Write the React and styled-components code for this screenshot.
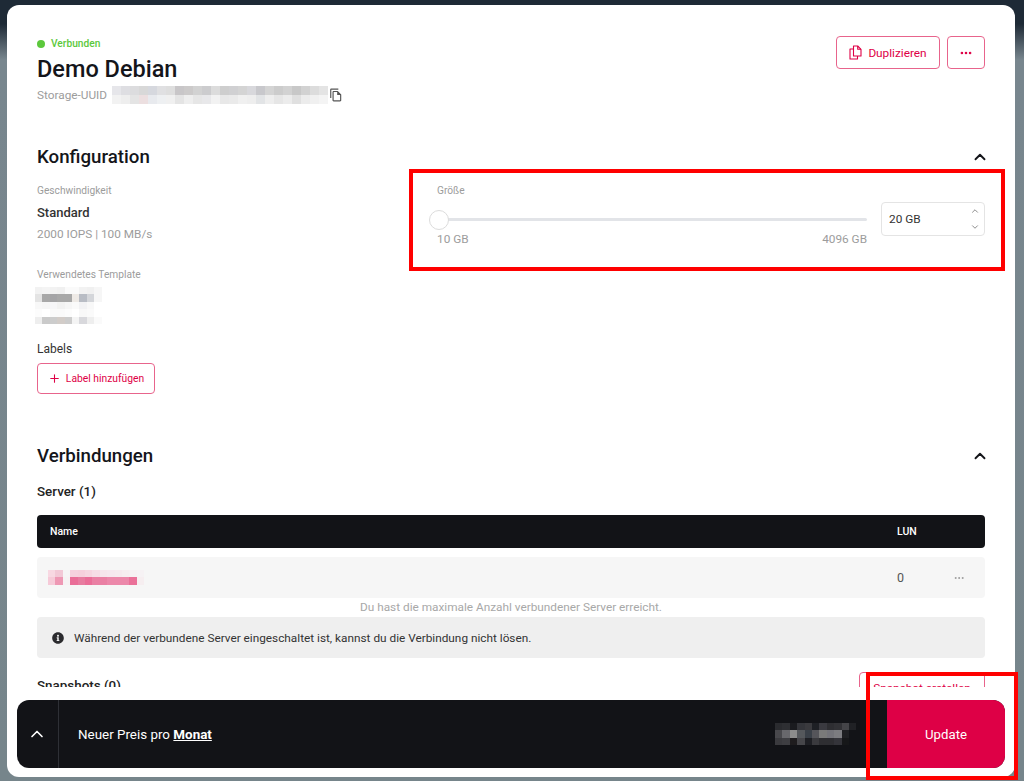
import React from 'react';
import styled, { createGlobalStyle } from 'styled-components';
import { ChevronUp, ChevronDown, Plus, Ellipsis } from 'lucide-react';
import { FaInfoCircle } from 'react-icons/fa';
import { MdOutlineFileCopy } from 'react-icons/md';

const pink = '#de0046';

const GlobalStyle = createGlobalStyle`
  html, body { margin: 0; padding: 0; height: 100%; }
  body {
    font-family: Roboto, "Liberation Sans", sans-serif;
    color: #14151a;
    overflow: hidden;
    background: linear-gradient(180deg, #1e2a36 0, #1e2a36 24px, #78868e 60px, #76858b 100%);
  }
`;

const Page = styled.div`
  position: relative;
  width: 1024px;
  height: 781px;
  padding: 5px 9px 4px 7px;
  box-sizing: border-box;
`;

const Card = styled.div`
  height: 100%;
  background: #fff;
  border-radius: 12px;
  display: flex;
  flex-direction: column;
  overflow: hidden;
`;

const Scroll = styled.div`
  height: 682px;
  overflow: hidden;
  padding: 31px 30px 0;
  box-sizing: border-box;
  flex: none;
`;

const Header = styled.div`
  display: flex;
  justify-content: space-between;
  align-items: flex-start;
  height: 109px;
`;

const Status = styled.div`
  display: flex;
  align-items: center;
  gap: 6px;
  height: 15px;
  font-size: 10.2px;
  font-weight: 500;
  color: #5cc83c;
`;

const Dot = styled.span`
  width: 8px;
  height: 8px;
  border-radius: 50%;
  background: #5cc83c;
`;

const Title = styled.h1`
  margin: 1px 0 0;
  font-size: 23.5px;
  line-height: 34px;
  font-weight: 500;
`;

const UuidRow = styled.div`
  display: flex;
  align-items: center;
  margin-top: 1px;
  height: 16px;
  font-size: 11.8px;
  color: #9c9c9c;
  svg { display: block; }
`;

const UuidLabel = styled.span`
  margin-right: 5px;
`;

const CopyButton = styled.span`
  display: flex;
  color: #555;
  margin-left: 1px;
`;

const HeaderActions = styled.div`
  display: flex;
  gap: 7px;
`;

const OutlineButton = styled.button`
  display: inline-flex;
  align-items: center;
  justify-content: center;
  gap: ${p => p.$gap || 6}px;
  width: ${p => p.$width}px;
  height: ${p => p.$height || 33}px;
  padding: 0;
  background: #fff;
  border: 1px solid #e8648c;
  border-radius: 4px;
  color: ${pink};
  font-family: inherit;
  font-size: ${p => p.$size || 11.8}px;
  box-sizing: border-box;
`;

const SectionHead = styled.div`
  display: flex;
  justify-content: space-between;
  align-items: center;
  height: 24px;
`;

const SectionTitle = styled.h2`
  margin: 0;
  font-size: 18.7px;
  font-weight: 500;
`;

const Toggle = styled.span`
  display: flex;
  color: #14151a;
  margin-right: -4px;
`;

const ConfigGrid = styled.div`
  display: grid;
  grid-template-columns: 400px 1fr;
  height: 260px;
  margin-top: 15px;
`;

const Caption = styled.div`
  font-size: 10.2px;
  line-height: 14px;
  color: #9c9c9c;
`;

const Strong = styled.div`
  margin-top: 7px;
  font-size: 13px;
  line-height: 16px;
  font-weight: 500;
  color: #333;
`;

const Muted = styled.div`
  margin-top: 5px;
  font-size: 11.8px;
  line-height: 16px;
  color: #9c9c9c;
`;

const TemplateBlock = styled.div`
  margin-top: 26px;
  svg { display: block; margin: 5px 0 0 -2px; }
`;

const LabelsTitle = styled.div`
  margin: 18px 0 6px;
  font-size: 12px;
  line-height: 15px;
  color: #333;
`;

const SizeRow = styled.div`
  display: flex;
  gap: 14px;
  margin-top: 4px;
`;

const SliderBox = styled.div`
  position: relative;
  width: 430px;
  padding-top: 16px;
`;

const Track = styled.div`
  height: 3px;
  background: #e2e4e8;
  border-radius: 2px;
`;

const Thumb = styled.span`
  position: absolute;
  left: -8px;
  top: 8px;
  width: 18px;
  height: 18px;
  background: #fff;
  border: 1px solid #dcdcdc;
  border-radius: 50%;
`;

const Range = styled.div`
  display: flex;
  justify-content: space-between;
  margin-top: 10px;
  font-size: 11.8px;
  line-height: 16px;
  color: #9c9c9c;
`;

const NumberField = styled.div`
  display: flex;
  align-items: center;
  justify-content: space-between;
  width: 104px;
  height: 34px;
  padding: 0 4px 0 7px;
  border: 1px solid #e4e4e4;
  border-radius: 4px;
  font-size: 11.8px;
  color: #333;
  box-sizing: border-box;
`;

const Stepper = styled.span`
  display: flex;
  flex-direction: column;
  gap: 6px;
  color: #777;
`;

const ServerTitle = styled.div`
  margin-top: 15px;
  font-size: 13.4px;
  line-height: 17px;
  font-weight: 500;
  color: #222;
`;

const TableHead = styled.div`
  display: grid;
  grid-template-columns: 1fr 88px;
  align-items: center;
  height: 33px;
  margin-top: 15px;
  padding-left: 13px;
  background: #121317;
  border-radius: 4px;
  color: #fff;
  font-size: 10.5px;
  font-weight: 500;
`;

const TableRow = styled.div`
  display: grid;
  grid-template-columns: 1fr 56px 32px;
  align-items: center;
  height: 41px;
  margin-top: 9px;
  padding-left: 11px;
  background: #f6f6f6;
  border-radius: 4px;
  font-size: 12.5px;
  color: #555;
  svg { display: block; }
`;

const RowMenu = styled.span`
  display: flex;
  color: #999;
`;

const Hint = styled.div`
  height: 19px;
  font-size: 11.8px;
  line-height: 19px;
  text-align: center;
  color: #a8a8a8;
`;

const Alert = styled.div`
  display: flex;
  align-items: center;
  gap: 10px;
  height: 41px;
  padding-left: 15px;
  background: #efefef;
  border-radius: 4px;
  font-size: 11.8px;
  color: #333;
`;

const SnapshotRow = styled.div`
  display: flex;
  justify-content: space-between;
  align-items: flex-start;
  margin-top: 14px;
`;

const SnapshotTitle = styled.div`
  margin-top: 5px;
  font-size: 13.4px;
  line-height: 17px;
  font-weight: 500;
  color: #222;
`;

const FooterWrap = styled.div`
  flex: 1;
  padding: 13px 10px 0;
`;

const Footer = styled.div`
  display: flex;
  align-items: center;
  height: 68px;
  background: #121317;
  border-radius: 12px;
  overflow: hidden;
  color: #fff;
`;

const FooterToggle = styled.div`
  display: flex;
  align-items: center;
  justify-content: center;
  width: 41px;
  height: 100%;
  border-right: 1px solid #2e3036;
  flex: none;
  svg { margin-left: -1px; }
`;

const Price = styled.div`
  flex: 1;
  display: flex;
  justify-content: space-between;
  align-items: center;
  padding: 0 31px 0 19px;
  font-size: 13.4px;
  svg { display: block; }
  b {
    font-weight: 700;
    text-decoration: underline;
  }
`;

const UpdateButton = styled.div`
  display: flex;
  align-items: center;
  justify-content: center;
  width: 118px;
  height: 100%;
  background: ${pink};
  font-size: 13.2px;
`;

const Marker = styled.div`
  position: absolute;
  left: ${p => p.$x}px;
  top: ${p => p.$y}px;
  width: ${p => p.$w}px;
  height: ${p => p.$h}px;
  border: 4px solid #f00;
  box-sizing: border-box;
  pointer-events: none;
`;

// blurred-out values from the screenshot, one colour per cell
const Mosaic = ({ cell, rows }) => (
  <svg width={rows[0].length * cell} height={rows.length * cell} shapeRendering="crispEdges">
    {rows.map((row, y) =>
      row.map((c, x) => <rect key={x} x={x * cell} y={y * cell} width={cell} height={cell} fill={c} />)
    )}
  </svg>
);

const DuplicateIcon = () => (
  <svg width="13" height="15" viewBox="0 0 13 15" fill="none" stroke="currentColor" strokeWidth="1.1" strokeLinejoin="round">
    <path d="M4.5 1h4.2L12 4.3V11H4.5z" />
    <path d="M8.7 1v3.3H12" />
    <path d="M4.5 4H1v10h7.5v-3" />
  </svg>
);

const uuidTop = ['#e6e6ea','#dedee2','#dcdcde','#d8d8d8','#d6d8de','#e0e0e2','#dedede','#c8c6c8','#cccaca','#d2d2d2','#ccccce','#dcdcdc','#cecece','#d0d0d2','#d4d4d4','#d8d8dc','#c8c8cc','#d4d4d4','#cccccc','#d2d2d2','#c8c8c8','#d2d2d2','#dcdcdc','#e4e4e4'];
const uuidBot = ['#f2f2f2','#eeeeee','#e4e4e4','#ecdfe0','#e8eaee','#eef0f2','#f0f0f0','#e4e4e4','#eeeeee','#e6e6e6','#e8e8ea','#f2f2f2','#e8e8e8','#eaeaea','#f0f0f0','#eeeeee','#e2e4e6','#eeeeee','#e6e6e6','#ececec','#e0e0e0','#ececec','#f0f0f0','#f4f4f4'];
const uuidCells = [uuidTop, uuidBot];

const templateCells = [
  ['#f2f2f2','#f4f4f4','#f2f2f2','#f0f0f0','#fafafa','#fafafa','#f2f2f2','#f0f0f0','#f6f6f6'],
  ['#e4e4e4','#a8a8a8','#a4a4a6','#a8a8a8','#a8a8a8','#eeeae6','#b8bcc4','#d4d6da','#f6f6f6'],
  ['#f8f8f8','#f6f6f6','#f6f6f8','#f2f2f2','#f6f6f6','#fafafa','#f2f2f4','#f8f8f8','#ffffff'],
  ['#fcfcfc','#ffffff','#fafafa','#fafafa','#fcfcfc','#ffffff','#f8f8f8','#fafafa','#ffffff'],
  ['#eeeeee','#cacaca','#cccccc','#d2ccc8','#cccccc','#f4f4f4','#d8d8dc','#eeeeee','#fafafa'],
];

const serverCells = [
  ['#f8d8e2','#f2c8d6','#f6f4f5','#f6d2de','#f6d0dc','#f6d6e0','#f6dee6','#f6e6ec','#f6e8ee','#f6eaee','#f6eef0','#f6f0f2','#f6f2f4'],
  ['#f6cad8','#ee98b4','#f6f2f3','#ea6e98','#e87ca0','#ea6e98','#ea80a4','#ea80a4','#ec88aa','#ec88aa','#ec88aa','#ea7098','#f6eef0'],
];

const priceCells = [
  ['#2a2b2f','#2e2f33','#1a1b1f','#34353a','#3a3a3e','#1e2025','#3a3a40','#2e2e32','#323236','#444448','#202125'],
  ['#48484c','#68686c','#8c8c8c','#55585c','#3a4048','#55555a','#7a7a7a','#74747a','#7c7c80','#1e1f22','#121317'],
  ['#3a3a3e','#3e3e42','#1e1c1e','#46464a','#1e1f24','#3a3a3e','#2e2e32','#2e2e32','#34343a','#161719','#121317'],
];

const App = () => (
  <Page>
    <GlobalStyle />
    <Card>
      <Scroll>
        <Header>
          <div>
            <Status><Dot />Verbunden</Status>
            <Title>Demo Debian</Title>
            <UuidRow>
              <UuidLabel>Storage-UUID</UuidLabel>
              <Mosaic cell={9} rows={uuidCells} />
              <CopyButton><MdOutlineFileCopy size={14} /></CopyButton>
            </UuidRow>
          </div>
          <HeaderActions>
            <OutlineButton $width={104}><DuplicateIcon />Duplizieren</OutlineButton>
            <OutlineButton $width={38}><Ellipsis size={14} strokeWidth={2.5} /></OutlineButton>
          </HeaderActions>
        </Header>

        <SectionHead>
          <SectionTitle>Konfiguration</SectionTitle>
          <Toggle><ChevronUp size={18} strokeWidth={2.5} /></Toggle>
        </SectionHead>
        <ConfigGrid>
          <div>
            <Caption>Geschwindigkeit</Caption>
            <Strong>Standard</Strong>
            <Muted>2000 IOPS | 100 MB/s</Muted>
            <TemplateBlock>
              <Caption>Verwendetes Template</Caption>
              <Mosaic cell={7.4} rows={templateCells} />
            </TemplateBlock>
            <LabelsTitle>Labels</LabelsTitle>
            <OutlineButton $width={118} $height={31} $size={10.3} $gap={5}><Plus size={13} strokeWidth={2} />Label hinzufügen</OutlineButton>
          </div>
          <div>
            <Caption>Größe</Caption>
            <SizeRow>
              <SliderBox>
                <Track />
                <Thumb />
                <Range><span>10 GB</span><span>4096 GB</span></Range>
              </SliderBox>
              <NumberField>
                20 GB
                <Stepper>
                  <ChevronUp size={10} />
                  <ChevronDown size={10} />
                </Stepper>
              </NumberField>
            </SizeRow>
          </div>
        </ConfigGrid>

        <SectionHead>
          <SectionTitle>Verbindungen</SectionTitle>
          <Toggle><ChevronUp size={18} strokeWidth={2.5} /></Toggle>
        </SectionHead>
        <ServerTitle>Server (1)</ServerTitle>
        <TableHead><span>Name</span><span>LUN</span></TableHead>
        <TableRow>
          <Mosaic cell={7.4} rows={serverCells} />
          <span>0</span>
          <RowMenu><Ellipsis size={12} /></RowMenu>
        </TableRow>
        <Hint>Du hast die maximale Anzahl verbundener Server erreicht.</Hint>
        <Alert><FaInfoCircle size={12} color="#2b2b2e" />Während der verbundene Server eingeschaltet ist, kannst du die Verbindung nicht lösen.</Alert>
        <SnapshotRow>
          <SnapshotTitle>Snapshots (0)</SnapshotTitle>
          <OutlineButton $width={126} $height={31}>Snapshot erstellen</OutlineButton>
        </SnapshotRow>
      </Scroll>
      <FooterWrap>
        <Footer>
          <FooterToggle><ChevronUp size={20} /></FooterToggle>
          <Price>
            <span>Neuer Preis pro <b>Monat</b></span>
            <Mosaic cell={7.4} rows={priceCells} />
          </Price>
          <UpdateButton>Update</UpdateButton>
        </Footer>
      </FooterWrap>
    </Card>
    <Marker $x={409} $y={169} $w={596} $h={102} />
    <Marker $x={866} $y={672} $w={152} $h={108} />
  </Page>
);

export default App;
